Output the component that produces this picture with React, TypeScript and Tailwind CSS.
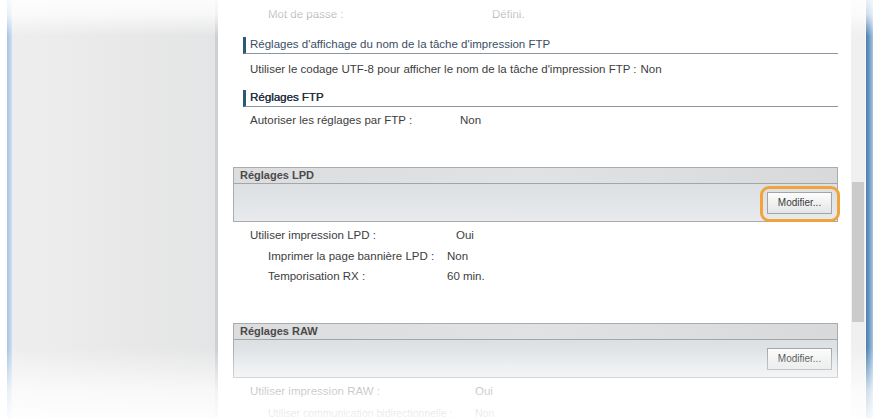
import React from "react";

function Heading({ children, dark }: { children: React.ReactNode; dark?: boolean }) {
  return (
    <div className="ml-[10px] flex h-[17px] items-center border-b border-l-[3px] border-b-[#8d97a1] border-l-[#2c5a74] pl-[4px]">
      <span className={`text-[11.5px] leading-none ${dark ? "text-[#1f2f42] [text-shadow:0.3px_0_0_#1f2f42]" : "text-[#3b4e64]"}`}>
        {children}
      </span>
    </div>
  );
}

function Row({
  label,
  value,
  indent,
  labelWidth,
  className = "",
}: {
  label: string;
  value: string;
  indent: number;
  labelWidth: number;
  className?: string;
}) {
  return (
    <div className={`flex h-[20px] items-center leading-none text-[#3d3d3d] ${className}`}>
      <span className={indent === 17 ? "pl-[17px]" : "pl-[35px]"} />
      <span style={{ width: labelWidth }} className="shrink-0 whitespace-nowrap">
        {label}
      </span>
      <span className="whitespace-nowrap">{value}</span>
    </div>
  );
}

function Box({ title, highlight }: { title: string; highlight?: boolean }) {
  return (
    <div className="border border-[#a9abad]">
      <div className="flex h-[16px] items-center border-b border-b-[#a3a5a7] bg-gradient-to-r from-[#dcdddf] via-[#e1e2e3] to-[#d8d9da] pl-[6px]">
        <span className="text-[11px] font-bold leading-none text-[#4a4a4a]">{title}</span>
      </div>
      <div className="flex h-[37px] items-center justify-end bg-gradient-to-b from-[#dce0e3] to-[#e8eaec] pr-[5px]">
        <div className="relative">
          <div className="flex h-[22px] w-[65px] items-center justify-center border border-[#a2a4a6] bg-gradient-to-b from-[#fdfdfd] to-[#e4e5e6] text-[10px] leading-none text-[#3a3a3a]">
            Modifier...
          </div>
          {highlight && (
            <div className="pointer-events-none absolute -bottom-[8px] -left-[7px] -right-[8px] -top-[6px] rounded-[9px] border-[3px] border-[#f1a33c]" />
          )}
        </div>
      </div>
    </div>
  );
}

export default function App() {
  return (
    <div className="relative flex h-[418px] w-[873px] overflow-hidden bg-white font-['Liberation_Sans',Arial,sans-serif]">
      {/* left side panel */}
      <div className="w-[7px] shrink-0 bg-white" />
      <div className="w-[5px] shrink-0 bg-gradient-to-r from-[#a7c2e2] to-[#cddff2]" />
      <div className="w-[203px] shrink-0 bg-gradient-to-r from-[#eeeeee] via-[#e9e9e9] to-[#e4e5e6]" />
      <div className="w-[3px] shrink-0 bg-[#cfd0d1]" />

      {/* main content */}
      <div className="w-[633px] shrink-0 pl-[15px] pr-[13px] pt-[5px]">
        <Row className="text-[11.5px]" label="Mot de passe :" value="Défini." indent={35} labelWidth={224} />

        <div className="mt-[12px]">
          <Heading>Réglages d'affichage du nom de la tâche d'impression FTP</Heading>
        </div>
        <div className="mt-[6px] flex h-[20px] items-center pl-[17px] text-[11.5px] leading-none text-[#3d3d3d]">
          <span className="whitespace-nowrap">
            Utiliser le codage UTF-8 pour afficher le nom de la tâche d'impression FTP :
          </span>
          <span className="ml-[4px]">Non</span>
        </div>

        <div className="mt-[10px]">
          <Heading dark>Réglages FTP</Heading>
        </div>
        <Row className="mt-[4px] text-[11.5px]" label="Autoriser les réglages par FTP :" value="Non" indent={17} labelWidth={210} />

        <div className="mt-[36px]">
          <Box title="Réglages LPD" highlight />
        </div>
        <Row className="mt-[4px] text-[11.5px]" label="Utiliser impression LPD :" value="Oui" indent={17} labelWidth={206} />
        <Row className="mt-[1px] text-[11.5px]" label="Imprimer la page bannière LPD :" value="Non" indent={35} labelWidth={179} />
        <Row className="text-[11.5px]" label="Temporisation RX :" value="60 min." indent={35} labelWidth={179} />

        <div className="mt-[36px]">
          <Box title="Réglages RAW" />
        </div>
        <Row className="mt-[4px] text-[11.5px]" label="Utiliser impression RAW :" value="Oui" indent={17} labelWidth={225} />
        <Row
          className="mt-[1px] text-[10.5px]"
          label="Utiliser communication bidirectionnelle :"
          value="Non"
          indent={35}
          labelWidth={207}
        />
      </div>

      {/* scrollbar */}
      <div className="flex w-[14px] shrink-0 flex-col bg-[#f0f0f0]">
        <div className="h-[182px]" />
        <div className="mx-[1px] h-[140px] bg-[#cbcbcb]" />
      </div>
      <div className="w-[1px] shrink-0 bg-[#f7f9fb]" />
      <div className="w-[7px] shrink-0 bg-gradient-to-r from-[#4b7cab] via-[#6f9cc7] to-[#a9c7e4]" />

      {/* fades over the screenshot edges */}
      <div className="pointer-events-none absolute left-0 right-0 top-0 h-[36px] bg-[linear-gradient(to_bottom,rgba(255,255,255,0.88)_0%,rgba(255,255,255,0.72)_40%,rgba(255,255,255,0)_100%)]" />
      <div className="pointer-events-none absolute bottom-0 left-0 right-0 h-[70px] bg-[linear-gradient(to_bottom,rgba(255,255,255,0)_0%,rgba(255,255,255,0.72)_60%,rgba(255,255,255,0.93)_100%)]" />
    </div>
  );
}
